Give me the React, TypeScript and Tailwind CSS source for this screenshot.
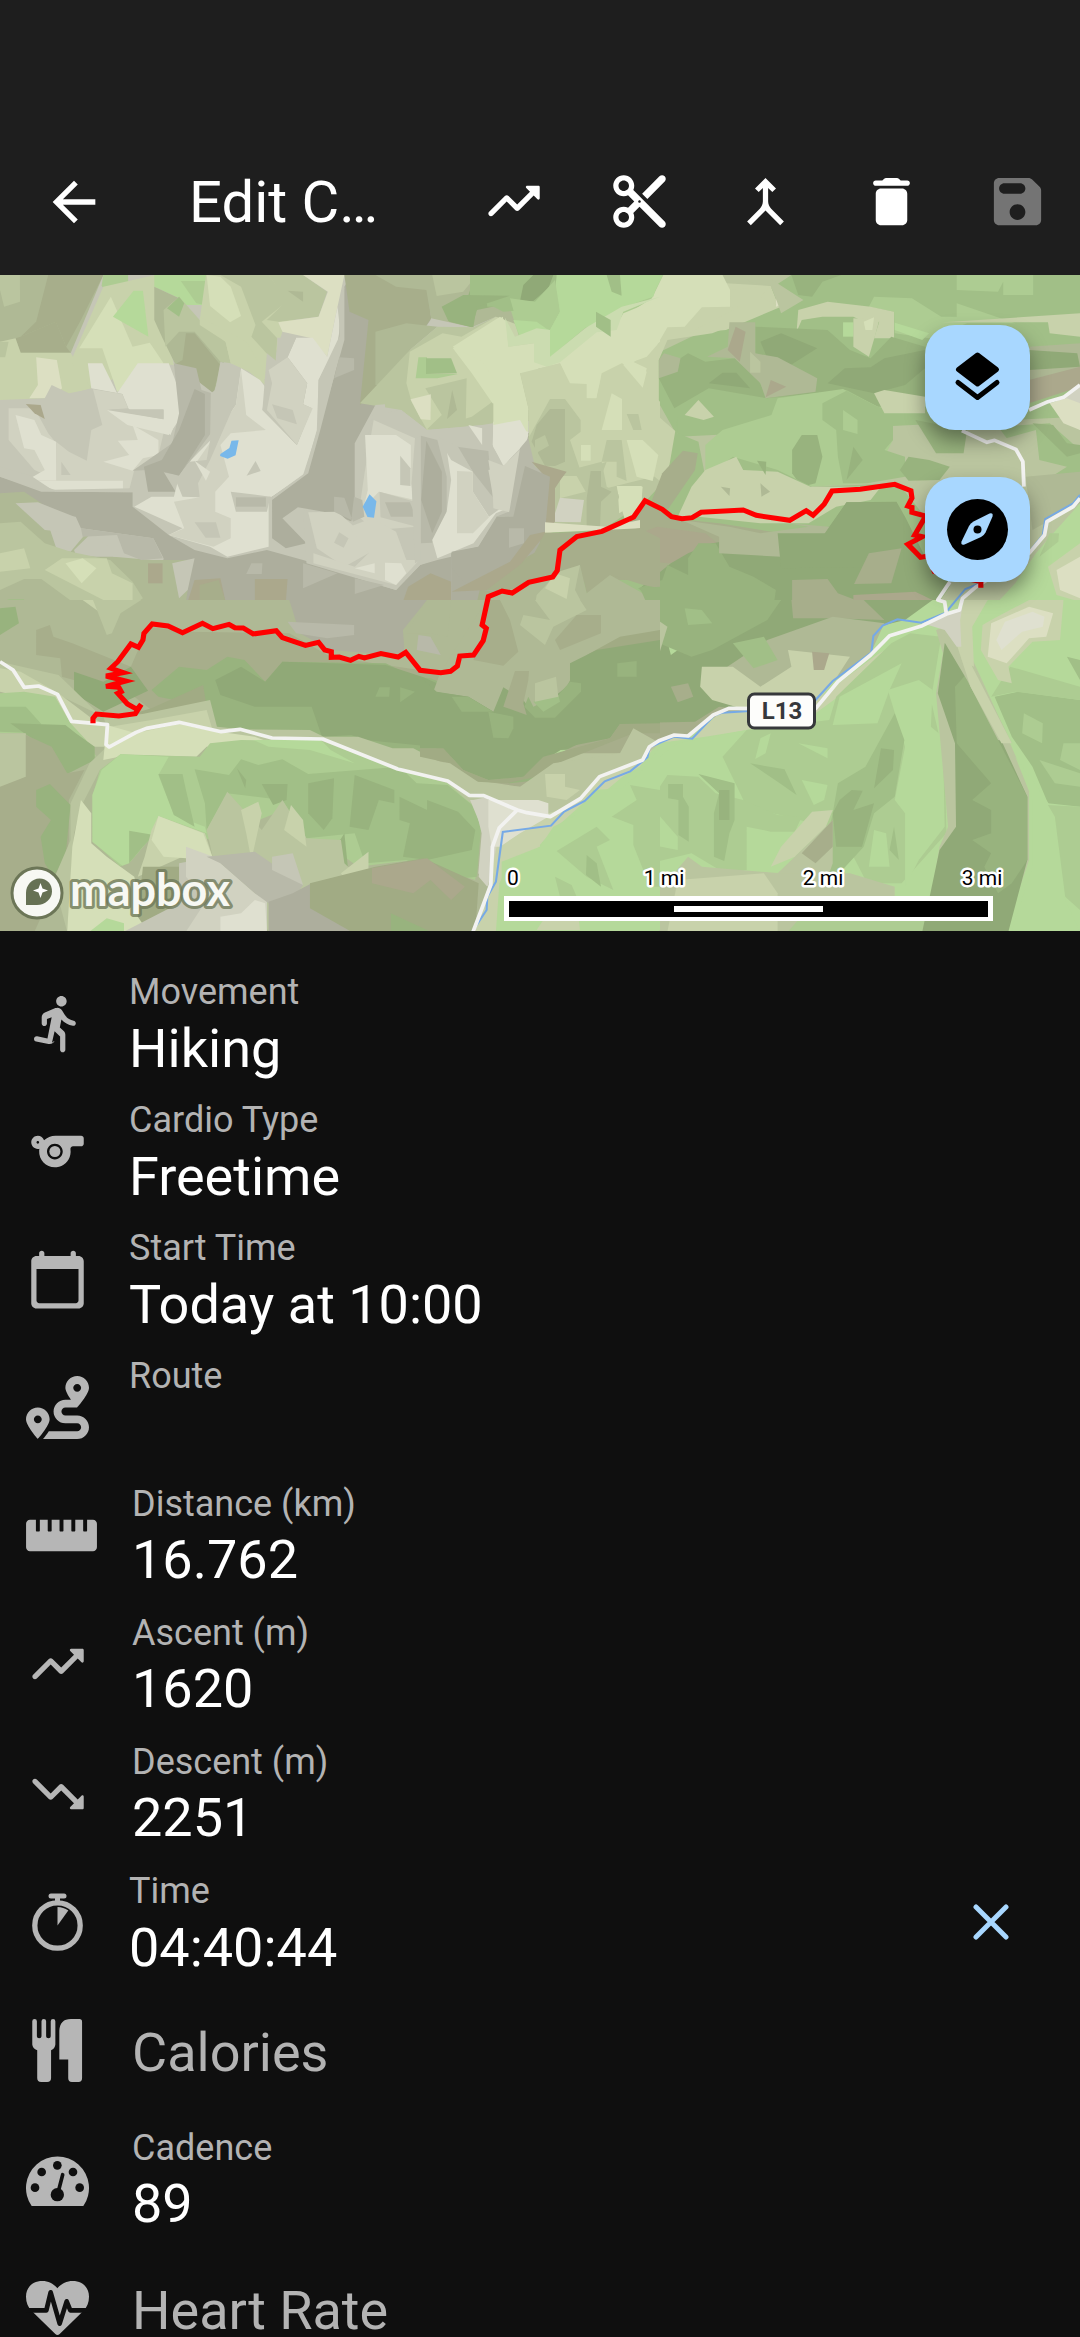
import React, { useState } from "react";
import { MdArrowBack, MdMerge } from "react-icons/md";
import { FaRoute, FaRulerHorizontal } from "react-icons/fa";

type Patch = [string, string];

const K = {
  g1: "#adae9d",
  g2: "#b8b9a9",
  g3: "#c5c6b6",
  g4: "#d1d2c1",
  g5: "#dfe0d0",
  o1: "#a7ae8b",
  o2: "#afb995",
  o3: "#bac59f",
  o4: "#c8d2ab",
  o5: "#d5dfb8",
  n1: "#90a977",
  n2: "#98b37e",
  n3: "#a1bf87",
  n4: "#adcc92",
  n5: "#b5d99a",
  b1: "#aba88c",
  b2: "#a1ab84",
  b3: "#dcdfc2",
  w: "#78b8ea",
};

const northWest: Patch[] = [
  [K.g3, "0,15 1568,15 1568,995 0,995"],
  [K.o2, "0,15 300,15 205,250 0,250"],
  [K.o3, "0,15 58,15 58,95 12,110 0,60"],
  [K.o1, "140,15 300,15 235,150 192,230 162,155 60,200 105,155"],
  [K.o1, "60,200 162,155 192,230 205,248 60,248 45,205"],
  [K.o4, "0,215 45,205 60,248 205,248 265,355 140,390 0,400"],
  [K.o3, "0,215 25,215 15,262 0,262"],
  [K.b3, "105,262 165,270 180,355 150,385 85,385 110,345"],
  [K.n4, "300,15 372,15 372,62 320,70 295,48"],
  [K.o4, "300,50 450,15 505,285 440,280 265,355 205,275"],
  [K.o5, "322,80 385,230 435,218 475,280 340,365 297,235 230,235"],
  [K.n5, "388,62 415,62 431,200 328,140"],
  [K.n5, "448,15 600,15 610,105 530,105 520,85 448,50"],
  [K.n4, "525,33 597,33 608,108 570,100"],
  [K.o4, "598,15 880,15 900,100 820,185 775,330 670,280 580,150"],
  [K.o5, "600,15 640,20 670,50 700,138 668,157 610,108"],
  [K.o3, "640,15 780,15 835,93 760,155 805,205 800,280 730,200 742,165 700,50"],
  [K.o3, "780,15 880,15 950,65 925,140 810,155 775,150 832,93"],
  [K.o2, "835,62 880,65 880,95"],
  [K.b3, "880,15 1000,15 980,110 950,260 905,205 820,185 808,157 925,140 952,65"],
  [K.o2, "448,50 520,85 580,165 655,260 620,370 580,330 510,285 470,200 448,150"],
  [K.o3, "475,120 520,80 580,150 655,215 670,280 640,275 565,185 520,185 480,230"],
  [K.n3, "485,115 520,80 535,100 520,140"],
  [K.o1, "540,190 565,190 640,285 620,370 570,330 505,285 530,270"],
  [K.o4, "580,140 715,215 765,300 770,345 700,285 670,280 655,215 580,165"],
  [K.g5, "255,280 297,280 340,370 400,280 490,280 520,360 520,430 495,495 370,415 355,372 265,355"],
  [K.g3, "130,385 150,345 200,370 265,357 355,372 375,420 480,420 475,450 495,500 480,530 410,580 100,620 0,590 0,390"],
  [K.g4, "25,415 100,415 140,490 160,515 165,630 100,600 25,510"],
  [K.g5, "45,435 100,450 120,495 163,515 165,632 75,632 130,600 100,540 70,535"],
  [K.b1, "75,402 118,405 130,447 100,430"],
  [K.g4, "163,515 200,545 252,572 265,480 297,465 270,358 355,372 372,415 310,420 475,490 460,555 390,600 375,660 200,640 163,632"],
  [K.g3, "178,575 205,615 178,615"],
  [K.g5, "310,420 475,448 475,417 520,420 520,450 490,495 370,465"],
  [K.g3, "315,418 475,418 475,448"],
  [K.g5, "342,512 400,510 385,465 460,510 460,555 415,565 385,602 300,575 375,555"],
  [K.g5, "80,632 357,632 357,665 160,660"],
  [K.g2, "505,280 570,295 585,360 615,370 612,490 555,570 520,615 430,600 385,602 500,520 520,430"],
  [K.g1, "565,357 595,372 595,495 520,617 475,605 510,665 430,665 418,590 470,570 520,480"],
  [K.g3, "640,275 700,295 685,405 610,510 612,370 625,360"],
  [K.g5, "700,295 755,330 773,355 762,420 862,525 905,415 880,403 892,340 835,262 860,203 908,203 950,260 980,110 990,200 925,330 922,480 880,615 795,680 780,680 780,830 660,860 610,830 490,795 530,775 390,710 440,680 505,680 520,620 555,570 612,510 685,405"],
  [K.g4, "685,405 700,300 715,435 772,480 670,490 640,525 665,620 625,665 625,725 670,745 670,805 620,830 490,795 535,775 505,695 580,682 550,620 575,570"],
  [K.g3, "775,250 805,275 805,203 860,203 835,262 892,340 880,403 905,415 862,525 762,420"],
  [K.g4, "835,262 892,340 880,403 908,415 862,525 775,420 790,340 780,300"],
  [K.g3, "790,403 850,420 862,463 805,445"],
  [K.g3, "680,405 612,500 600,570 550,575 510,630 530,680 580,682 575,640 610,570"],
  [K.g5, "565,572 610,605 598,632"],
  [K.g3, "742,573 757,603 716,617"],
  [K.g3, "670,665 785,680 775,725 685,725"],
  [K.g2, "685,682 772,682 772,710 685,710"],
  [K.g3, "565,757 627,757 640,803 597,803"],
  [K.g1, "0,620 120,665 385,667 385,710 490,795 565,840 660,865 775,840 880,870 910,880 1100,945 1150,960 1220,885 1270,870 1310,860 1310,995 460,995 475,865 445,805 235,775 220,740 0,740"],
  [K.g3, "0,590 90,617 160,665 385,667 385,655 120,660 0,620"],
  [K.g1, "1000,50 1020,15 1150,15 1250,60 1250,150 1190,240 1090,405 1030,520 1030,700 1020,755 1010,750 940,725 865,712 820,745 890,820 830,835 790,805 790,680 890,610 925,480 970,320"],
  [K.g3, "985,110 1000,50 1000,210 970,320 930,480 895,610 790,690 790,680 885,610 920,480 925,330 985,200"],
  [K.g2, "970,325 1028,300 1028,265 985,262"],
  [K.o1, "1000,15 1090,15 1150,20 1240,60 1252,145 1190,240 1150,300 1045,405 1070,150 1015,125"],
  [K.o2, "1090,185 1180,160 1270,170 1190,240 1120,345 1090,345"],
  [K.o2, "1090,15 1568,15 1568,205 1440,140 1370,172 1252,145 1238,60 1150,50"],
  [K.o3, "1255,15 1385,15 1345,65 1268,78"],
  [K.n2, "1380,15 1568,15 1568,80 1430,110 1385,120 1370,172 1305,155 1285,110 1360,75"],
  [K.n3, "1405,35 1480,20 1568,15 1480,85 1475,110 1415,110"],
  [K.n2, "1510,15 1568,15 1568,85 1490,85"],
  [K.o3, "1270,170 1375,172 1440,140 1568,190 1568,450 1240,480 1165,420 1045,400 1190,240"],
  [K.o4, "1190,245 1285,190 1340,200 1440,140 1568,190 1568,240 1450,380 1370,440 1240,480 1195,395 1180,340"],
  [K.o5, "1315,235 1355,205 1460,140 1475,230 1540,235 1568,310 1510,310 1535,420 1430,400 1370,310"],
  [K.n4, "1480,110 1568,85 1568,185 1508,202"],
  [K.n4, "1215,262 1240,262 1240,312 1330,312 1270,325 1207,325"],
  [K.n3, "1237,265 1310,265 1327,310 1237,312"],
  [K.o3, "1235,355 1355,325 1352,470 1240,478 1283,435"],
  [K.b3, "1192,388 1251,373 1250,450 1222,448"],
  [K.o2, "1313,360 1327,420 1298,447"],
  [K.g3, "1090,405 1118,403 1118,430 1165,420 1240,480 1400,465 1490,450 1535,490 1450,740 1270,865 1220,885 1150,960 890,880 880,720 1025,755 1055,560"],
  [K.g4, "1085,450 1205,505 1215,600 1210,770 1090,780 1040,740 1060,600"],
  [K.g5, "1060,495 1150,495 1193,525 1193,640 1205,690 1100,665 1055,715 1068,660"],
  [K.g3, "1162,557 1192,595 1192,648 1162,645"],
  [K.g3, "1102,665 1205,695 1210,770 1105,742"],
  [K.g2, "1118,697 1190,697 1208,740 1135,740"],
  [K.g4, "895,727 980,725 1050,790 1070,850 1000,890 920,835"],
  [K.g2, "970,680 1000,683 1025,755 1058,740 1052,690 1028,680 1020,750 970,725"],
  [K.g3, "985,787 1012,805 998,833 970,818"],
  [K.g4, "1015,770 1080,745 1150,785 1180,870 1218,870 1150,945 910,880 910,850 1030,890 1070,850"],
  [K.g5, "1030,895 1088,880 1088,910"],
  [K.g5, "1118,878 1165,880 1180,910 1150,945 1118,930"],
  [K.g3, "1205,505 1220,500 1222,870 1205,880 1195,640"],
  [K.g2, "1222,497 1270,510 1297,620 1297,725 1255,818 1222,820"],
  [K.g1, "1238,512 1283,605 1283,725 1255,790 1223,690"],
  [K.g5, "1297,540 1373,603 1373,665 1420,740 1460,710 1430,635 1485,710 1440,730 1375,820 1270,865 1255,810 1297,725 1310,630"],
  [K.g4, "1327,603 1373,605 1373,665 1420,742 1373,790 1327,790"],
  [K.g2, "1327,530 1418,543 1430,680 1373,605"],
  [K.g3, "1270,500 1330,530 1373,605 1310,570"],
  [K.g5, "1360,465 1400,475 1400,525"],
  [K.g5, "1432,455 1520,450 1535,490 1465,587 1432,530"],
  [K.g4, "1465,587 1505,550 1492,725 1432,680 1418,600"],
  [K.g2, "1535,490 1568,440 1568,590 1500,740 1440,740 1490,720 1510,560"],
  [K.o2, "1535,490 1568,440 1568,590 1525,585"],
  [K.g1, "1525,590 1568,605 1568,880 1460,930 1400,995 1310,995 1310,850 1390,830 1445,742 1495,740"],
  [K.g2, "1480,775 1522,775 1522,830 1480,830"],
  [K.o2, "0,670 70,665 120,700 165,840 205,845 250,790 330,860 440,870 560,870 545,960 540,995 0,995"],
  [K.g3, "45,700 110,697 220,742 180,785 130,780"],
  [K.g3, "215,840 265,790 355,860 280,860 220,855"],
  [K.g2, "235,775 445,805 473,865 410,870 360,850 340,795 240,800"],
  [K.o3, "0,760 60,755 130,820 205,845 320,870 385,935 415,985 400,995 0,995"],
  [K.o4, "0,850 70,835 88,895 0,905"],
  [K.o4, "180,865 310,865 325,910 385,940 385,990 310,995 130,900"],
  [K.o5, "190,880 240,865 280,895 237,940"],
  [K.o2, "0,960 70,927 120,927 210,995 0,995"],
  [K.n3, "25,988 70,988 70,995 10,995"],
  [K.b1, "430,880 472,880 472,940 430,940"],
  [K.g3, "500,880 565,865 545,960 520,985"],
  [K.b1, "565,930 640,925 655,995 545,995"],
  [K.o1, "580,945 635,930 655,995 580,995"],
  [K.b1, "740,927 835,927 830,995 740,995"],
  [K.g2, "730,880 762,880 760,912 715,912"],
  [K.g2, "880,880 980,910 880,955"],
  [K.g2, "1030,925 1115,945 1030,972"],
  [K.b1, "1185,950 1250,910 1310,935 1310,995 1170,995"],
  [K.o1, "1400,930 1568,840 1568,995 1385,995"],
  [K.w, "672,512 693,511 684,556 661,566 639,558 640,552 666,534"],
  [K.w, "1073,673 1093,694 1086,743 1067,741 1053,710"],
];

const northEast: Patch[] = [
  [K.o3, "0,15 1568,15 1568,995 0,995"],
  [K.n3, "730,15 1568,15 1568,440 400,500 340,390 340,250 500,170"],
  [K.n4, "0,15 380,15 300,130 235,145 130,175 0,290"],
  [K.n5, "50,15 358,15 325,80 245,112 235,140 130,172 30,262 30,205 0,200"],
  [K.n4, "0,60 45,35 50,120 0,185"],
  [K.n3, "165,127 206,155 206,200 165,170"],
  [K.n3, "197,15 232,20 235,77 208,70"],
  [K.o4, "0,290 140,180 235,145 370,60 540,40 670,48 690,100 600,150 500,190 370,210 345,270 345,440 400,490 370,620 310,690 170,760 0,750"],
  [K.o5, "358,15 530,15 552,60 552,110 470,112 420,170 370,172 340,225 310,260 270,275 310,295 295,355 240,280 175,340 162,387 135,385 135,345 85,345 60,280 0,290 130,178 235,145 325,85"],
  [K.o4, "552,60 670,48 640,80 700,110 540,180 430,190 580,110 552,112"],
  [K.b3, "685,62 730,95 685,110"],
  [K.o3, "580,15 660,20 750,80 765,90 700,130 690,100 670,48 610,35"],
  [K.n2, "730,15 875,15 820,35 790,80 750,75"],
  [K.n4, "1210,15 1432,15 1432,75 1345,75 1345,35 1330,65 1210,60"],
  [K.n4, "955,110 970,80 1080,85 1165,140 1210,140 1210,100 1380,160 1240,160 1130,205 1030,190 1028,125"],
  [K.o4, "750,120 835,95 960,110 1028,125 1028,205 970,205 985,155 940,155 910,140 820,140 760,150 745,185"],
  [K.n5, "880,157 910,157 910,200 880,200"],
  [K.o4, "910,145 985,150 975,190 955,260 910,230"],
  [K.o5, "940,155 970,142 965,180 945,180"],
  [K.n5, "1030,158 1130,190 1110,210 1030,180"],
  [K.n2, "625,170 835,180 900,240 960,265 1020,200 1118,230 1118,400 1000,420 890,360 660,385 625,250"],
  [K.n2, "345,325 400,270 430,250 480,275 565,265 625,310 660,385 490,355 390,415"],
  [K.n1, "640,215 700,190 805,235 720,290 660,265"],
  [K.n1, "835,340 885,295 960,292 1000,265 1118,240 1118,295 1060,345 970,370"],
  [K.n1, "490,340 530,308 570,308 610,355"],
  [K.o2, "550,157 625,157 625,250 690,262 805,325 800,365 655,385 640,340 565,265 485,260 545,230"],
  [K.b1, "568,170 597,185 580,275 545,240"],
  [K.o3, "610,245 640,275 640,308 610,308"],
  [K.b1, "670,330 715,350 655,382"],
  [K.o2, "345,270 360,250 408,265 400,305 345,325"],
  [K.n4, "480,525 530,480 672,435 690,385 880,357 980,410 1025,410 1025,510 960,640 780,650 700,610 480,620"],
  [K.n3, "820,400 890,362 980,410 1025,420 1025,510 1000,540 1060,560 1060,620 950,640 880,640 865,560 860,480 820,450"],
  [K.n4, "880,420 922,450 922,492 880,480"],
  [K.n2, "760,495 805,495 820,560 800,640 760,650 732,610 732,540"],
  [K.n2, "910,530 937,570 890,630"],
  [K.n2, "1045,600 1070,560 1130,570 1190,590 1160,630 1070,632"],
  [K.n2, "1090,450 1240,480 1230,550 1150,550"],
  [K.o4, "1000,360 1118,380 1118,430 1000,430 970,370"],
  [K.o4, "1170,157 1568,130 1568,200 1480,190 1475,157"],
  [K.o2, "1420,230 1568,220 1568,300 1420,380"],
  [K.n1, "1420,240 1560,250 1568,290 1420,300"],
  [K.b1, "1420,330 1568,290 1568,350 1420,400"],
  [K.g4, "1490,400 1568,350 1568,480 1510,440"],
  [K.b3, "1480,400 1530,385 1568,400 1568,480 1520,460"],
  [K.n3, "1330,470 1480,460 1568,540 1568,620 1440,620"],
  [K.n2, "1430,460 1490,465 1530,520 1568,525 1568,550 1530,560"],
  [K.o3, "1300,520 1440,480 1450,570 1530,590 1440,650 1310,580"],
  [K.o2, "1410,620 1568,605 1568,700 1430,780"],
  [K.n3, "400,440 400,490 460,515 480,620 560,560 690,600 790,650 1040,640 1118,740 1118,862 1190,950 1160,995 0,995 0,800 300,690 370,620"],
  [K.o4, "480,600 570,560 590,600 690,605 785,650 990,650 960,690 860,710 780,760 640,760 460,740 400,740 440,650"],
  [K.n2, "630,572 657,575 655,615"],
  [K.o2, "640,640 668,665 643,680"],
  [K.o2, "525,650 552,655 550,678"],
  [K.o4, "420,435 460,390 505,440 475,450"],
  [K.o2, "0,440 35,417 72,417 118,480 110,540 72,588 0,590"],
  [K.o1, "0,450 35,417 72,417 72,588 0,590"],
  [K.o4, "95,510 135,480 180,560 180,590 118,603"],
  [K.o5, "118,527 148,527 148,572 118,572"],
  [K.o5, "252,510 310,510 343,555 325,635 285,605"],
  [K.o5, "208,373 240,395 238,480 178,480"],
  [K.o2, "252,433 283,433 297,480 268,478"],
  [K.o3, "235,575 310,600 355,640 310,690 180,780 45,770 60,600"],
  [K.o2, "148,603 178,605 175,660 145,690 120,770 118,660"],
  [K.o5, "225,648 298,650 295,690 230,730"],
  [K.o1, "0,790 180,784 272,745 310,700 380,745 520,760 700,790 700,860 460,890 250,930 130,930 100,995 0,995"],
  [K.o1, "355,610 415,542 458,550 450,600 370,720 325,690"],
  [K.b1, "340,770 480,790 550,850 370,880 210,860 130,850"],
  [K.n1, "430,850 500,820 700,785 840,770 890,697 1035,695 1060,740 1118,860 1190,936 1150,995 330,995 290,955 380,880"],
  [K.n2, "430,865 460,820 510,820 550,890 620,920 685,960 680,995 330,995 285,955 355,930 370,885 430,915"],
  [K.o2, "700,860 800,830 840,770 720,760 780,770 640,790 550,770 410,750 520,800 520,850"],
  [K.n1, "690,790 830,790 890,697 1035,697 1070,830 1000,890 700,895"],
  [K.o1, "955,850 1050,835 1020,940 912,942"],
  [K.o1, "732,930 835,927 865,970 930,995 732,995"],
  [K.b1, "910,975 1090,965 1150,995 910,995"],
  [K.n5, "1440,850 1490,790 1568,700 1568,995 1330,995 1380,940"],
  [K.n4, "1480,790 1507,790 1505,815 1450,860"],
  [K.o4, "1475,890 1568,820 1568,995 1500,975"],
  [K.b3, "1500,900 1568,860 1568,985 1510,960"],
];

const southWest: Patch[] = [
  [K.o2, "0,0 1568,0 1568,995 0,995"],
  [K.n2, "0,25 45,20 55,70 0,105"],
  [K.o4, "240,0 390,0 300,45"],
  [K.o3, "270,0 310,105 325,100 350,40 410,0"],
  [K.o1, "105,90 145,75 155,110 210,130 380,200 430,80 540,95 840,100 960,170 1280,220 1350,130 1440,230 1568,250 1568,590 1400,580 900,440 560,320 440,330 390,290 180,230 175,175 105,165"],
  [K.g1, "840,0 1240,0 1170,90 1175,160 1080,160 960,150 870,100"],
  [K.g2, "835,65 1028,75 1028,105 950,115 860,100"],
  [K.g2, "1215,105 1250,110 1280,165 1210,150"],
  [K.o2, "1240,0 1310,0 1300,110 1250,100 1180,100"],
  [K.n2, "440,270 520,200 600,210 660,170 710,180 770,245 820,185 1120,190 1200,230 1250,235 1400,300 1470,300 1568,290 1568,540 1480,550 1380,530 1300,480 940,430 620,380 600,320 460,290"],
  [K.n1, "625,240 700,200 770,245 820,185 1120,195 1230,232 1420,320 1568,300 1568,520 1475,537 1370,510 1260,440 1060,420 1020,405 935,410 905,320 740,320 640,285"],
  [K.n2, "1090,290 1102,262 1132,262 1130,290"],
  [K.n2, "1162,262 1205,275 1162,307"],
  [K.n1, "215,215 300,245 380,200 430,272 300,335 215,280"],
  [K.b2, "440,325 590,255 600,320 500,350 390,340"],
  [K.o3, "0,185 170,225 280,335 400,345 610,300 630,380 700,388 900,390 940,410 1040,410 1140,445 1200,445 1380,540 1568,570 1568,650 1400,620 1250,570 940,450 690,420 520,400 330,440 300,350 160,280 0,220"],
  [K.o4, "0,205 60,215 170,280 260,350 320,380 440,360 600,330 620,400 500,395 320,440 250,440 180,370 60,290 0,275"],
  [K.n4, "0,280 70,275 160,290 205,370 250,420 280,470 220,450 120,400 0,400"],
  [K.n3, "0,320 75,320 118,370 118,400 0,395"],
  [K.n2, "30,370 190,375 220,400 275,440 275,480 195,522 85,410"],
  [K.o3, "0,400 75,400 75,530 0,570"],
  [K.o1, "75,405 150,440 195,520 245,510 200,600 200,720 190,790 100,995 0,995 0,560 75,530"],
  [K.n2, "105,570 145,552 205,615 190,770 155,830 130,790 118,710 148,660 105,620"],
  [K.o3, "310,440 370,450 290,510 235,620 215,700 195,995 155,840 205,720 205,610 260,490"],
  [K.o5, "235,600 265,640 265,730 310,770 390,830 420,995 195,995 210,740"],
  [K.o5, "310,375 395,400 520,372 600,390 740,410 790,430 600,440 570,470 370,465 300,480"],
  [K.n4, "270,585 290,510 350,463 580,470 610,430 700,420 940,425 1160,510 1300,550 1400,640 1380,840 1200,780 1040,800 960,740 880,720 800,640 610,720 440,650 450,700 350,800 270,725"],
  [K.n5, "268,585 295,510 350,463 490,470 460,525 505,645 595,680 600,700 460,648 440,710 375,790 355,797 268,725"],
  [K.n5, "735,420 930,418 960,450 1030,490 900,450 780,440"],
  [K.n3, "565,508 665,525 700,478 750,495 820,478 895,522 1160,500 1210,550 1300,555 1400,640 1385,830 1300,840 1180,780 1060,790 1030,700 890,715 820,600 660,580 600,690 595,610"],
  [K.n3, "460,522 530,522 540,570 565,680 505,645"],
  [K.n2, "688,505 715,540 712,565"],
  [K.n2, "760,552 835,552 832,600 793,615"],
  [K.n2, "895,550 970,535 965,655 940,690 895,640"],
  [K.n2, "1030,525 1145,570 1145,610 1100,600 1070,690 1015,680"],
  [K.n2, "1160,590 1240,630 1240,600 1330,635 1380,690 1370,750 1240,780 1170,770 1190,670 1160,660"],
  [K.n2, "975,740 1000,700 1010,800 985,795"],
  [K.n3, "375,692 447,705 415,740 375,790"],
  [K.o3, "600,690 660,575 760,690 820,600 890,715 990,720 1000,790 1060,850 1040,995 780,995 690,850 620,780"],
  [K.o4, "700,630 750,605 760,640 730,780 715,700"],
  [K.o4, "845,615 880,660 890,740 825,690"],
  [K.o4, "990,820 1070,755 1070,845 1000,835"],
  [K.o4, "460,648 595,700 620,780 530,770 400,830 420,770 440,690"],
  [K.o5, "460,648 590,700 620,780 475,770 440,720"],
  [K.b2, "415,800 520,800 520,930 430,995 400,950"],
  [K.g3, "520,790 620,770 640,800 740,880 775,905 775,995 360,995 520,910"],
  [K.g4, "540,740 620,770 740,880 775,900 775,995 540,995 600,900 540,830"],
  [K.g2, "600,770 740,755 880,855 850,900 780,910 740,880 640,790"],
  [K.g3, "790,770 850,760 880,855 790,810"],
  [K.g1, "780,905 850,880 905,850 1020,930 1020,995 780,995"],
  [K.b2, "900,850 1090,800 1230,775 1390,850 1380,995 1020,995 900,925"],
  [K.b1, "1080,805 1240,775 1350,860 1310,900 1250,840 1200,880 1080,850"],
  [K.n2, "1135,940 1250,995 1135,995"],
  [K.g4, "1365,600 1450,600 1568,600 1568,700 1450,730 1415,860 1390,830 1405,700"],
  [K.g5, "1420,600 1568,605 1568,680 1455,690 1420,660"],
  [K.o4, "1450,700 1568,690 1568,995 1380,995 1420,850"],
  [K.n5, "1480,790 1568,740 1568,995 1440,995 1450,850"],
  [K.n5, "260,995 310,955 360,970 360,995"],
  [K.g5, "640,950 700,940 740,900 770,910 775,995 640,995"],
];

const southEast: Patch[] = [
  [K.n5, "0,0 1568,0 1568,995 0,995"],
  [K.o3, "0,0 270,0 200,180 0,190"],
  [K.o1, "45,75 90,45 180,50 190,105 300,125 80,155"],
  [K.n1, "0,180 100,180 160,150 370,125 380,165 480,90 560,50 700,0 1140,0 1060,60 980,80 950,160 830,250 600,330 520,330 420,400 290,440 60,450 0,490"],
  [K.n2, "220,0 700,0 660,60 500,150 440,170 300,110"],
  [K.n2, "225,185 280,185 280,230 225,230"],
  [K.n3, "420,25 470,30 500,70 430,75"],
  [K.o3, "300,30 370,80 345,165 300,165"],
  [K.o1, "730,0 940,0 1000,60 850,55 735,55"],
  [K.o2, "530,210 660,120 850,50 1000,70 960,160 850,240 680,260 600,270"],
  [K.n3, "560,130 650,110 690,180 620,205"],
  [K.o4, "470,200 560,200 640,260 730,200 720,150 900,170 850,250 790,320 600,330 500,300 465,260"],
  [K.b1, "790,155 840,160 825,210 795,210"],
  [K.o1, "380,260 430,250 445,290 400,307"],
  [K.o1, "0,490 230,370 450,365 520,320 600,330 500,355 420,410 340,430 300,480 180,530 0,590"],
  [K.o3, "0,510 60,460 240,460 300,440 290,490 170,550 120,600 0,650"],
  [K.o4, "0,525 70,525 70,570 160,530 110,600 0,650"],
  [K.g4, "0,610 100,590 60,650 0,670"],
  [K.o4, "0,690 80,640 170,570 290,500 340,430 480,410 600,390 800,340 880,280 1000,160 1080,100 970,170 790,310 600,330 520,340 440,415 390,405 320,440 300,480 180,530 100,610 0,660"],
  [K.n5, "0,740 60,650 110,650 160,570 240,570 360,460 400,430 600,390 840,400 840,780 480,995 0,995"],
  [K.n4, "860,290 1020,130 1075,100 1165,110 1135,300 1175,480 1180,700 1050,850 950,850 870,690 600,620 530,470 600,390 840,360"],
  [K.n5, "760,540 835,555 825,600 795,615"],
  [K.n5, "1010,270 1100,240 1140,270 1135,380 1170,410 1175,680 1100,780 1060,860 1060,640 1030,600 1060,440"],
  [K.n5, "870,290 1050,190 1015,270 980,370 850,375"],
  [K.n5, "750,430 835,445 835,475"],
  [K.n5, "640,415 670,400 655,460 625,477"],
  [K.n3, "610,490 710,508 745,585 690,545"],
  [K.n4, "250,555 345,565 370,525 460,530 510,580 590,600 690,645 760,650 740,695 670,695 600,680 600,810 530,815 440,760 320,790 280,870 160,860 45,750 165,680 205,720 290,645 210,640"],
  [K.n5, "280,648 345,645 400,710 400,750 300,730 265,700"],
  [K.n3, "372,552 415,552 415,590 432,620 432,725 402,705 402,600 372,595"],
  [K.n3, "460,522 565,550 565,660 550,700 535,783 505,770 505,640 520,580"],
  [K.n2, "520,570 550,570 550,660 520,660"],
  [K.n3, "865,550 945,500 1030,340 1058,420 1030,590 970,640 940,740 860,830 800,880 830,740 850,640"],
  [K.n2, "990,445 1028,450 1025,510 970,565"],
  [K.n2, "870,600 905,570 937,572 910,630 970,610 935,740 860,740 850,640"],
  [K.n5, "970,690 1005,700 1015,800 955,800"],
  [K.n3, "1028,680 1042,780 1015,750"],
  [K.o4, "700,740 790,635 850,630 830,680 740,770 670,800"],
  [K.o3, "740,770 850,660 850,790 830,850 980,860 1030,890 680,890 690,820"],
  [K.o1, "760,760 850,660 850,740 800,790"],
  [K.n3, "45,830 90,850 100,890 60,890"],
  [K.n3, "135,770 165,795 180,860 135,820"],
  [K.o3, "380,830 430,770 470,800 700,820 900,820 1030,860 1030,995 350,995 260,900"],
  [K.o4, "400,840 650,820 690,880 690,995 370,995"],
  [K.n4, "750,960 1140,950 1110,995 720,995"],
  [K.o3, "1150,90 1190,75 1230,120 1310,300 1420,560 1420,780 1350,995 1120,995 1160,740 1185,680 1150,280 1170,160"],
  [K.n1, "1175,130 1210,120 1240,220 1330,400 1415,590 1415,780 1360,995 1110,995 1160,750 1208,680 1205,430 1155,280"],
  [K.n2, "1240,220 1320,400 1415,590 1415,780 1370,850 1330,880 1290,800 1310,760 1255,720 1310,700 1310,630 1255,600 1310,550 1210,430 1205,260"],
  [K.o3, "1165,110 1220,90 1260,200 1370,430 1330,420 1240,240"],
  [K.o4, "1190,70 1230,90 1255,200 1370,430 1340,430 1250,260"],
  [K.g4, "1110,70 1230,20 1225,90 1240,140 1210,140 1175,90"],
  [K.o4, "1230,0 1300,0 1255,80 1260,200 1225,180 1220,60"],
  [K.n3, "1320,290 1390,275 1568,300 1568,620 1475,610 1430,500 1370,410 1320,290"],
  [K.n4, "1365,200 1568,260 1568,300 1380,275 1310,290"],
  [K.n4, "1405,340 1460,370 1458,430 1400,400"],
  [K.n4, "1450,480 1568,520 1568,560 1495,550"],
  [K.n4, "1520,430 1568,430 1568,510 1510,480"],
  [K.n5, "1380,470 1480,615 1495,650 1525,900 1568,995 1370,995 1430,800 1430,600"],
  [K.n4, "1475,615 1568,620 1568,930 1525,890 1495,650"],
  [K.o4, "1310,60 1420,0 1520,0 1510,120 1430,125 1360,200 1370,250 1330,240 1280,150 1285,75"],
  [K.b3, "1310,70 1420,20 1490,40 1470,110 1420,115 1355,190 1300,170"],
  [K.g5, "1350,65 1430,35 1465,50 1460,80 1400,95 1340,150 1325,120"],
  [K.n3, "1530,170 1568,180 1568,240"],
];

const ridgeNorth: Patch[] = [
  [K.n3, "150,0 410,0 400,100 250,110 150,60"],
  [K.n2, "130,60 270,62 170,95 160,157 85,138 65,95"],
  [K.n1, "310,30 340,0 400,0 385,40 340,78 300,78"],
  [K.n4, "270,70 345,80 405,15 420,110 390,165 290,140"],
  [K.n5, "280,135 350,140 385,165 300,187"],
  [K.n5, "410,0 720,0 700,65 605,95 590,140 500,155 390,245 390,165 420,110"],
  [K.n3, "560,0 600,0 605,62 575,50"],
  [K.o5, "98,215 240,125 260,140 265,215 342,205 342,262 420,265 500,190 590,150 610,115 720,70 720,200 640,262 600,265 540,295 530,370 500,370 450,325 420,265 300,295 325,400 325,470 220,450 220,310 190,262"],
  ["#cbdcb0", "255,128 285,185 350,160 390,165 390,245 500,157 605,95 720,65 610,110 590,165 530,172 420,262 380,275 342,262 342,205 265,215"],
  [K.n3, "528,110 572,135 572,185 528,155"],
  [K.o4, "300,295 420,265 450,325 500,327 500,370 530,370 545,295 605,265 680,340 720,380 720,600 560,640 450,600 330,560 325,400"],
  [K.o5, "640,262 680,290 668,338 610,270"],
  [K.o3, "390,372 435,372 482,435 482,470 450,495 482,588 560,560 545,600 430,620 340,575 325,490"],
  [K.o2, "390,402 435,402 435,560 405,573 375,572 335,500 350,450"],
  [K.o3, "345,495 375,480 387,512 355,530 345,555"],
  [K.o5, "575,355 606,372 606,465 545,465"],
  [K.o3, "620,417 655,417 665,465 640,465"],
  [K.o5, "483,510 512,510 512,557 483,557"],
  [K.o3, "560,495 605,495 620,618 590,605 590,560 545,560"],
  [K.o5, "620,495 668,495 715,540 698,618 650,605"],
  [K.o3, "430,590 545,560 560,635 600,660 560,760 380,760 390,600"],
  [K.o4, "420,603 470,603 497,650 420,670"],
  [K.g4, "420,668 492,675 482,742 385,740 405,715"],
  [K.o2, "512,588 543,588 543,635 575,650 543,680 540,755 500,755 500,670"],
  [K.o5, "590,633 665,633 665,690 620,755 605,700"],
  [K.g5, "220,450 300,435 325,480 320,500 250,572 218,510"],
  [K.g4, "250,572 325,500 295,590 268,712 220,700 218,640 205,555"],
  [K.g2, "300,520 325,490 345,575 385,600 315,590 280,725 268,710"],
  [K.b1, "335,560 440,590 425,610 405,640 405,740 375,770 380,610"],
  [K.g1, "315,573 390,605 375,770 345,790 290,850 225,950 150,940 95,880 95,830 175,815 230,725 280,725"],
  [K.b3, "375,742 560,755 660,735 660,760 375,773"],
  [K.g2, "267,760 312,760 312,805 267,818"],
  [K.b1, "330,780 375,770 375,780 300,870 240,930 200,945 95,950 270,860"],
  [K.o1, "375,773 560,775 660,760 720,790 720,940 670,930 575,900 560,945 500,955 480,870 440,830 400,900 260,950 200,945 300,870 340,840"],
  [K.o2, "200,1020 215,960 400,905 480,870 500,955 570,900 660,950 720,990 720,1020"],
  [K.o3, "350,960 415,890 480,870 465,945 500,1010 400,1020 345,990"],
  [K.o4, "375,940 405,895 450,910 440,972"],
  [K.n2, "660,940 720,935 720,1020 680,985"],
];

const ridgeSouth: Patch[] = [
  [K.o2, "60,220 200,0 720,0 720,130 480,185 440,260 340,340 220,335 145,290 40,275"],
  [K.o1, "210,0 240,0 270,60 295,155 250,197 160,180 190,110"],
  [K.o3, "345,0 480,0 500,30 400,80 375,135 300,75 310,45 390,60"],
  [K.o1, "470,45 543,45 543,100 420,150 405,120"],
  [K.b2, "500,165 600,110 720,90 720,130 520,160"],
  [K.n1, "0,230 50,275 145,290 220,335 250,262 310,300 345,350 410,350 450,250 450,190 530,150 720,120 720,375 600,372 570,415 420,445 370,470 310,530 205,540 130,510 70,445 0,445"],
  [K.o1, "285,213 327,213 325,240 310,310 320,345 250,320"],
  [K.n2, "340,320 415,285 450,245 483,250 483,275 405,353 345,353 313,320 325,290"],
  [K.n3, "340,305 415,285 420,305 370,335"],
  [K.o3, "345,250 408,230 415,290 345,305"],
  [K.n2, "95,290 145,290 220,335 125,335"],
  [K.n2, "205,335 280,350 280,385 265,415 220,413"],
  [K.n2, "592,190 650,183 650,230 592,230"],
  [K.b2, "0,445 70,445 130,510 205,540 310,530 370,470 570,415 600,372 720,370 720,400 640,400 400,495 350,530 260,550 170,545 90,490 0,470"],
  [K.o3, "0,475 90,490 180,550 300,560 400,490 600,460 640,385 720,430 660,480 540,530 480,595 390,650 200,590 80,545 0,525"],
  [K.o4, "375,522 435,522 435,560 480,570 440,600 380,590"],
  [K.g4, "160,600 205,590 205,740 215,760 205,860 175,820 185,700"],
  [K.o4, "245,700 385,640 440,625 560,540 620,520 560,570 500,600 400,690 350,745 250,780 220,850"],
  [K.g5, "205,600 355,600 385,610 385,650 300,700 240,740 215,740 205,680"],
  [K.n5, "245,785 360,740 400,680 470,645 520,570 605,565 660,520 720,440 720,990 245,990"],
  [K.n4, "410,753 530,680 570,720 530,740 580,870 500,830"],
  [K.n4, "575,650 650,600 630,555 720,570 720,860 690,860 640,735 640,675"],
  [K.n3, "500,765 530,790 543,860 498,825"],
  [K.n4, "405,830 455,855 470,890 420,890"],
  [K.o4, "390,930 475,950 480,990 350,990"],
];

const TRACK =
  "M270 1360V1345L280 1332 345 1338 393 1331 410 1303 398 1318 370 1302 342 1270 352 1265 345 1252 308 1249 365 1233 308 1218 358 1208 322 1195 342 1175 380 1122 402 1132 415 1110 418 1090 442 1062 488 1068 530 1088 588 1060 618 1076 665 1063 682 1073 706 1074 735 1092 802 1082 820 1103 887 1126 925 1117 943 1140 962 1145V1162L985 1161 1018 1171 1042 1159 1058 1164 1106 1151 1156 1161 1178 1147 1220 1201 1280 1208 1308 1204 1328 1188 1335 1158 1375 1155 1403 1112 1412 1075 1400 1065 1418 980 1458 963 1487 969 1535 937 1605 921 1618 902 1626 840 1675 800 1748 784 1840 741 1873 692 1923 718 1950 740 1980 746 2010 743 2036 727 2158 720 2196 736 2293 751 2341 722 2361 736 2393 703 2416 663 2498 658 2598 643 2645 662 2648 684 2636 708 2648 712V727L2688 738 2656 795 2678 800 2636 823 2673 862 2693 858 2713 905 2760 915 2848 935V953";

const ROADS = [
  "M0 1175L38 1200 70 1252 112 1248 167 1273 208 1354 312 1364 308 1424 317 1431 395 1387 425 1375 520 1357 642 1385 697 1378 790 1404 937 1407 1155 1497 1300 1533 1362 1576 1405 1577 1502 1620 1530 1628 1598 1640 1686 1585 1741 1520 1866 1470 1886 1430 1913 1412 1958 1395 1998 1398 2071 1335 2116 1315 2368 1316 2433 1235 2528 1155 2583 1097 2678 1067 2748 1032 2786 1020 2795 985 2835 950 2988 850 3033 795 3040 755 3116 710 3136 685",
  "M1502 1620L1450 1673 1430 1730 1425 1845 1372 1990",
  "M2758 936L2723 990 2743 996 2748 1032",
  "M2988 420L3043 395 3088 382 3136 345",
  "M2793 482L2866 517 2888 511 2950 538 2970 575 2973 650",
];

const RIVER =
  "M1368 1990L1413 1920 1415 1880 1440 1835 1460 1686 1600 1667 1638 1625 1698 1593 1756 1534 1830 1504 1880 1462 1886 1432 1958 1400 2010 1406 2073 1337 2098 1328 2188 1322 2368 1290 2418 1233 2530 1148 2536 1098 2563 1067 2606 1048 2675 1058 2746 1028 2803 957 2833 945 2993 840 3028 795 3035 747 3116 700 3136 675";

function Terrain({ patches, transform }: { patches: Patch[]; transform: string }) {
  return (
    <g transform={transform}>
      {patches.map(([fill, points], i) => (
        <polygon key={i} fill={fill} points={points} />
      ))}
    </g>
  );
}

function TerrainMap() {
  return (
    <svg
      className="block h-full w-full"
      viewBox="0 0 1080 656"
      preserveAspectRatio="xMidYMid slice"
      role="img"
      aria-label="Route map"
    >
      <g transform="scale(0.34439 0.33333) translate(0 -15)">
        <Terrain patches={northWest} transform="translate(0 0)" />
        <Terrain patches={northEast} transform="translate(1568 0)" />
        <Terrain patches={southWest} transform="translate(0 990)" />
        <Terrain patches={southEast} transform="translate(1568 990)" />
      </g>
      <Terrain patches={ridgeNorth} transform="translate(420 0) scale(0.33333)" />
      <Terrain patches={ridgeSouth} transform="translate(420 325) scale(0.33333)" />
      <g transform="scale(0.34439 0.33333) translate(0 -15)">
        <path d={RIVER} fill="none" stroke="#76a9e6" strokeWidth="6" />
        {ROADS.map((d) => (
          <path key={d} d={d} fill="none" stroke="#f2f2f0" strokeWidth="11" strokeLinejoin="round" />
        ))}
        <path d={TRACK} fill="none" stroke="#ff0000" strokeWidth="15" strokeLinejoin="miter" />
      </g>
      <rect x="748.5" y="419" width="66" height="34" rx="6" fill="#fdfdfb" stroke="#36383b" strokeWidth="3" />
      <text
        x="782"
        y="444"
        textAnchor="middle"
        fill="#36383b"
        fontFamily="Roboto, sans-serif"
        fontSize="24"
        fontWeight="700"
      >
        L13
      </text>
    </svg>
  );
}

function MapboxLogo() {
  return (
    <svg className="absolute bottom-0 left-0 h-[72px] w-[240px]" viewBox="0 0 240 72" role="img" aria-label="Mapbox">
      <circle cx="37" cy="34" r="25" fill="#f7f8f3" stroke="#6c7657" strokeWidth="3" />
      <path d="M26 46V34c0-8 6-14.500 13.500-14.500S52 25 52 32.500 45 46 37 46z" fill="#667154" />
      <path d="M40.500 24l2 5.500 5.500 2-5.500 2-2 5.500-2-5.500-5.500-2 5.500-2z" fill="#fff" />
      <text
        x="70"
        y="47"
        fontFamily="Lato, sans-serif"
        fontWeight="700"
        fontSize="45"
        fill="#f7f8f3"
        stroke="#6c7657"
        strokeOpacity="0.75"
        strokeWidth="6"
        strokeLinejoin="round"
        paintOrder="stroke"
      >
        mapbox
      </text>
    </svg>
  );
}

function ScaleBar() {
  const labels: [number, string][] = [
    [13, "0"],
    [164, "1 mi"],
    [323, "2 mi"],
    [482, "3 mi"],
  ];
  return (
    <svg
      className="absolute right-[70px] bottom-2 h-[60px] w-[510px]"
      viewBox="0 0 510 60"
      role="img"
      aria-label="Scale: 3 miles"
    >
      {labels.map(([x, label]) => (
        <text
          key={label}
          x={x}
          y="22"
          textAnchor="middle"
          fontFamily="Roboto, sans-serif"
          fontSize="21"
          fill="#000"
          stroke="#fff"
          strokeWidth="5"
          strokeLinejoin="round"
          paintOrder="stroke"
        >
          {label}
        </text>
      ))}
      <rect x="4" y="33" width="489" height="25" fill="#fff" />
      <rect x="9" y="38" width="479" height="16" fill="#000" />
      <rect x="174" y="43" width="149" height="6" fill="#fff" />
    </svg>
  );
}

function Glyph({ d, children, flip }: { d?: string; children?: React.ReactNode; flip?: boolean }) {
  return (
    <svg className="size-[63px]" viewBox="0 0 24 24" fill="currentColor" aria-hidden="true">
      <g transform={flip ? "translate(0 24) scale(1 -1)" : undefined}>
        {d && <path fillRule="evenodd" d={d} />}
        {children}
      </g>
    </svg>
  );
}

const P = {
  trend:
    "M16.85 6.85l1.44 1.44-4.88 4.88-3.29-3.29c-.39-.39-1.02-.39-1.41 0l-6 6.010c-.39.39-.39 1.020 0 1.410.39.39 1.020.39 1.410 0L9.410 12l3.290 3.290c.39.39 1.020.39 1.410 0l5.590-5.580 1.440 1.440c.31.31.85.09.85-.35V6.500c.01-.28-.21-.5-.49-.5h-4.290c-.45 0-.67.54-.36.85z",
  cut: "M9.640 7.640c.23-.5.36-1.050.36-1.640 0-2.210-1.790-4-4-4S2 3.790 2 6s1.790 4 4 4c.59 0 1.140-.13 1.640-.36L10 12l-2.360 2.360C7.140 14.130 6.590 14 6 14c-2.210 0-4 1.790-4 4s1.790 4 4 4 4-1.790 4-4c0-.59-.13-1.140-.36-1.640L12 14l7.600 7.600c.55.55 1.450.55 2 0s.55-1.450 0-2L9.640 7.640zM6 8c-1.100 0-2-.89-2-2s.9-2 2-2 2 .89 2 2-.9 2-2 2zm0 12c-1.100 0-2-.89-2-2s.9-2 2-2 2 .89 2 2-.9 2-2 2zm6-7.500c-.28 0-.5-.22-.5-.5s.22-.5.5-.5.5.22.5.5-.22.5-.5.5zM13 9l2 2 6.600-6.600c.55-.55.55-1.450 0-2s-1.450-.55-2 0z",
  trash:
    "M6 19c0 1.100.9 2 2 2h8c1.100 0 2-.9 2-2V9c0-1.100-.9-2-2-2H8c-1.100 0-2 .9-2 2v10zM18 4h-2.500l-.71-.71c-.18-.18-.44-.29-.7-.29H9.910c-.26 0-.52.11-.7.29L8.500 4H6c-.55 0-1 .45-1 1s.45 1 1 1h12c.55 0 1-.45 1-1s-.45-1-1-1z",
  save: "M17.590 3.590c-.38-.38-.89-.59-1.420-.59H5c-1.110 0-2 .9-2 2v14c0 1.100.9 2 2 2h14c1.100 0 2-.9 2-2V7.830c0-.53-.21-1.040-.59-1.410l-2.820-2.830zM12 19c-1.660 0-3-1.340-3-3s1.340-3 3-3 3 1.340 3 3-1.340 3-3 3zm1-10H7c-1.100 0-2-.9-2-2s.9-2 2-2h6c1.100 0 2 .9 2 2s-.9 2-2 2z",
  run: "M13.490 5.480c1.100 0 2-.9 2-2s-.9-2-2-2-2 .9-2 2 .9 2 2 2zm-3.600 13.900l1-4.400 2.100 2v5c0 .55.45 1 1 1s1-.45 1-1v-5.640c0-.55-.22-1.070-.62-1.450l-1.480-1.410.6-3c1.070 1.240 2.620 2.130 4.360 2.410.6.09 1.140-.39 1.140-1 0-.49-.36-.9-.85-.98-1.520-.25-2.780-1.150-3.450-2.330l-1-1.600c-.4-.6-1-1-1.700-1-.3 0-.5.1-.8.1l-3.990 1.690c-.74.32-1.220 1.040-1.220 1.840v2.370c0 .55.45 1 1 1s1-.45 1-1v-1.700l1.800-.7-1.600 8.100-3.920-.8c-.54-.11-1.070.24-1.180.78-.11.54.24 1.080.78 1.180l4.730.95c1.080.22 2.140-.5 2.280-1.200z",
  whistle:
    "M11.230 6c-1.660 0-3.220.66-4.360 1.730C6.540 6.730 5.610 6 4.500 6 3.120 6 2 7.120 2 8.500S3.120 11 4.500 11c.21 0 .41-.03.61-.08-.05.25-.09.51-.1.78-.18 3.680 2.950 6.680 6.680 6.270 2.550-.28 4.680-2.260 5.190-4.770.15-.71.15-1.400.06-2.060-.09-.6.38-1.140.99-1.140H21c.55 0 1-.45 1-1V7c0-.55-.45-1-1-1h-9.770zM4.500 9c-.28 0-.5-.22-.5-.5s.22-.5.5-.5.5.22.5.5-.22.5-.5.5zm6.500 6c-1.660 0-3-1.340-3-3s1.340-3 3-3 3 1.340 3 3-1.340 3-3 3z",
  calendar:
    "M20 3h-1V2c0-.55-.45-1-1-1s-1 .45-1 1v1H7V2c0-.55-.45-1-1-1s-1 .45-1 1v1H4c-1.100 0-2 .9-2 2v16c0 1.100.9 2 2 2h16c1.100 0 2-.9 2-2V5c0-1.100-.9-2-2-2zm-1 18H5c-.55 0-1-.45-1-1V8h16v12c0 .55-.45 1-1 1z",
};

const timerIcon = (
  <svg className="size-[63px]" viewBox="0 0 63 63" aria-hidden="true">
    <circle cx="31.500" cy="34.500" r="22.700" fill="none" stroke="currentColor" strokeWidth="5.300" />
    <rect x="22.500" y="2.500" width="18" height="5" rx="2.500" fill="currentColor" />
    <path d="M29 6h5v6h-5z" fill="currentColor" />
    <path d="M31.500 34.500V16q6 0 10.800 3.500z" fill="currentColor" />
  </svg>
);

const cutleryIcon = (
  <svg className="size-[63px]" viewBox="78 505 189 191" fill="currentColor" aria-hidden="true">
    <path d="M96 512q0-7 7-7t7 7v45q0 6 7 6t7-6v-45q0-7 7-7t7 7v45q0 6 7 6t7-6v-45q0-7 7-7t7 7v70q-1 12-13 18v84q0 12-12 12h-18q-12 0-12-12v-84q-14-6-15-18z" />
    <path d="M178 540q2-35 35-35h26q8 0 8 8v172q0 11-11 11h-20q-11 0-11-11v-57h-27z" />
  </svg>
);

const gaugeIcon = (
  <svg className="size-[63px]" viewBox="78 891 189 189" aria-hidden="true">
    <path d="M95 1065A94.500 94.500 0 1 1 250 1065z" fill="currentColor" />
    <g fill="#0f0f0f">
      <circle cx="172" cy="943" r="13" />
      <circle cx="125" cy="963" r="13" />
      <circle cx="219" cy="963" r="13" />
      <circle cx="105" cy="1010" r="13" />
      <circle cx="239" cy="1010" r="13" />
      <circle cx="172" cy="1031" r="20" />
    </g>
    <path d="M188 971l-15 58" stroke="#0f0f0f" strokeWidth="11" strokeLinecap="round" />
  </svg>
);

const heartIcon = (
  <svg className="size-[63px]" viewBox="78 1278 189 189" aria-hidden="true">
    <path
      d="M172 1312C160 1297 145 1290 127 1290C98 1290 78 1309 78 1337C78 1355 84 1368 96 1381L166 1449Q172 1455 179 1449L249 1381C261 1368 267 1355 267 1337C267 1309 247 1290 218 1290C200 1290 185 1297 172 1312Z"
      fill="currentColor"
    />
    <path
      d="M70 1378H139L152 1324 179 1418 200 1351 211 1378H275"
      fill="none"
      stroke="#0f0f0f"
      strokeWidth="14"
      strokeLinejoin="round"
    />
  </svg>
);

function IconCell({ children }: { children: React.ReactNode }) {
  return <span className="flex w-[103px] shrink-0 items-center text-[#b6b6b6]">{children}</span>;
}

function PickerRow({
  icon,
  label,
  value,
  onClear,
}: {
  icon: React.ReactNode;
  label: string;
  value: string;
  onClear?: () => void;
}) {
  return (
    <div className="flex h-32 shrink-0 items-center pr-[58px] pl-[26px]">
      <IconCell>{icon}</IconCell>
      <button type="button" className="flex h-full flex-1 flex-col justify-center pt-2 text-left">
        <span className="text-[36px] leading-[44px] text-[#b3b3b3]">{label}</span>
        <span className="h-[70px] text-[54px] leading-[70px] text-white">{value}</span>
      </button>
      {onClear && (
        <button
          type="button"
          aria-label={`Clear ${label}`}
          onClick={onClear}
          className="flex size-[63px] items-center justify-center text-[#a8d7ff]"
        >
          <svg className="size-9" viewBox="0 0 36 36" aria-hidden="true">
            <path d="M3 3l30 30M33 3L3 33" stroke="currentColor" strokeWidth="5" strokeLinecap="round" />
          </svg>
        </button>
      )}
    </div>
  );
}

function InputRow({ id, icon, label, initial }: { id: string; icon: React.ReactNode; label: string; initial: string }) {
  const [value, setValue] = useState(initial);
  const filled = initial !== "";
  return (
    <div className="flex h-[129px] shrink-0 items-center pr-[58px] pl-[26px]">
      <IconCell>{icon}</IconCell>
      <div className="flex flex-1 flex-col justify-center pt-1 pl-[3px]">
        {filled && (
          <label htmlFor={id} className="text-[36px] leading-[44px] text-[#b3b3b3]">
            {label}
          </label>
        )}
        <input
          id={id}
          value={value}
          aria-label={filled ? undefined : label}
          placeholder={filled ? undefined : label}
          onChange={(e) => setValue(e.target.value)}
          className="h-[68px] w-full bg-transparent text-[54px] leading-[68px] text-white outline-none placeholder:text-[#b3b3b3] placeholder:opacity-100"
        />
      </div>
    </div>
  );
}

function ToolButton({ label, disabled, children }: { label: string; disabled?: boolean; children: React.ReactNode }) {
  return (
    <button
      type="button"
      aria-label={label}
      disabled={disabled}
      className="flex h-full w-[126px] items-center justify-center text-white disabled:text-[#747474]"
    >
      {children}
    </button>
  );
}

function MapButton({ label, children }: { label: string; children: React.ReactNode }) {
  return (
    <button
      type="button"
      aria-label={label}
      className="flex size-[105px] items-center justify-center rounded-[30px] bg-[#a8d7ff] text-black shadow-[0_10px_20px_rgba(0,0,0,0.4)]"
    >
      {children}
    </button>
  );
}

export default function App() {
  const [time, setTime] = useState("04:40:44");
  return (
    <div className="flex h-screen flex-col overflow-hidden bg-[#0f0f0f] font-[Roboto,sans-serif] text-white">
      <header className="shrink-0 bg-[#1e1e1e] pt-32">
        <div className="flex h-[147px] items-center">
          <button type="button" aria-label="Back" className="flex h-full w-[147px] items-center justify-center">
            <MdArrowBack className="size-16" />
          </button>
          <h1 className="min-w-0 flex-1 truncate pl-[42px] text-[58px] leading-[76px]">Edit C…</h1>
          <ToolButton label="Elevation">
            <Glyph d={P.trend} />
          </ToolButton>
          <ToolButton label="Cut">
            <Glyph d={P.cut} />
          </ToolButton>
          <ToolButton label="Merge">
            <MdMerge className="size-[63px]" />
          </ToolButton>
          <ToolButton label="Delete">
            <Glyph d={P.trash} />
          </ToolButton>
          <ToolButton label="Save" disabled>
            <Glyph d={P.save} />
          </ToolButton>
        </div>
      </header>

      <section className="relative h-[656px] shrink-0 overflow-hidden">
        <TerrainMap />
        <MapboxLogo />
        <ScaleBar />
        <div className="absolute top-[50px] right-[50px] flex flex-col gap-[47px]">
          <MapButton label="Map layers">
            <svg className="size-[63px]" viewBox="0 0 63 63" aria-hidden="true">
              <g stroke="currentColor" strokeWidth="5" strokeLinejoin="round" strokeLinecap="round">
                <path d="M12.500 23.500l19-14.500 19 14.500-19 14.500z" fill="currentColor" />
                <path d="M12 36.500l19.500 15 19.500-15" fill="none" />
              </g>
            </svg>
          </MapButton>
          <MapButton label="Compass">
            <svg className="size-[63px]" viewBox="0 0 63 63" aria-hidden="true">
              <circle cx="31.500" cy="31.500" r="30.500" fill="currentColor" />
              <path
                d="M46.500 18.500L39.500 34.500q-1.500 3-4.500 4.500L18.500 46.500q-4 1-3-3L23 28q1.500-3 4.500-4.500L43.500 15.500q4-1 3 3z"
                fill="#a8d7ff"
              />
              <circle cx="31.500" cy="31.500" r="4" fill="currentColor" />
            </svg>
          </MapButton>
        </div>
      </section>

      <main className="flex min-h-0 flex-1 flex-col overflow-y-auto pt-7 [scrollbar-width:none]">
        <PickerRow icon={<Glyph d={P.run} />} label="Movement" value="Hiking" />
        <PickerRow
          icon={
            <Glyph d={P.whistle}>
              <circle cx="11" cy="12" r="2.100" />
            </Glyph>
          }
          label="Cardio Type"
          value="Freetime"
        />
        <PickerRow icon={<Glyph d={P.calendar} />} label="Start Time" value="Today at 10:00" />
        <PickerRow icon={<FaRoute className="size-[63px]" />} label="Route" value="" />
        <InputRow
          id="distance"
          icon={<FaRulerHorizontal className="h-[63px] w-[71px]" />}
          label="Distance (km)"
          initial="16.762"
        />
        <InputRow id="ascent" icon={<Glyph d={P.trend} />} label="Ascent (m)" initial="1620" />
        <InputRow id="descent" icon={<Glyph d={P.trend} flip />} label="Descent (m)" initial="2251" />
        <PickerRow icon={timerIcon} label="Time" value={time} onClear={() => setTime("")} />
        <InputRow id="calories" icon={cutleryIcon} label="Calories" initial="" />
        <InputRow id="cadence" icon={gaugeIcon} label="Cadence" initial="89" />
        <InputRow id="heart-rate" icon={heartIcon} label="Heart Rate" initial="" />
      </main>
    </div>
  );
}
